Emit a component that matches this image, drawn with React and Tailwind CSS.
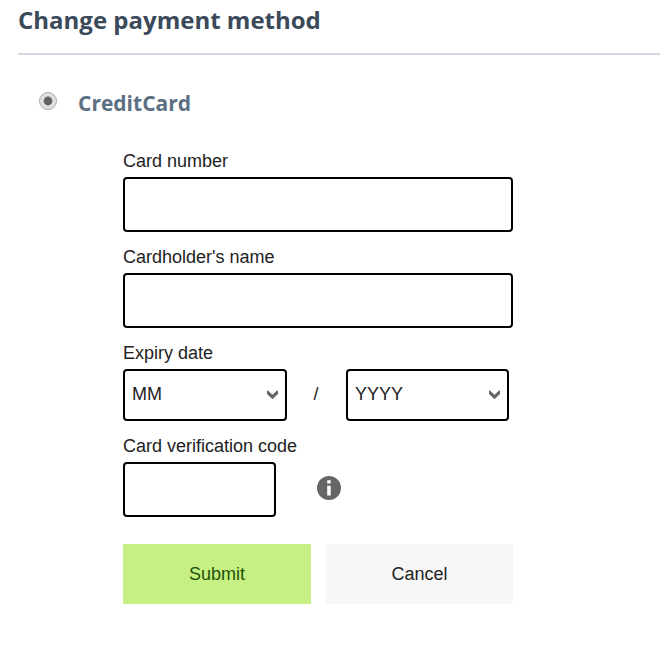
import { useState } from "react";

const months = ["01", "02", "03", "04", "05", "06", "07", "08", "09", "10", "11", "12"];
const years = ["2024", "2025", "2026", "2027", "2028", "2029", "2030"];

const inputClass = "block h-[55px] rounded-[4px] border-2 border-black bg-white px-2 outline-none";

const TextField = ({ id, label, value, onChange }) => (
  <div className="mb-[13px]">
    <label htmlFor={id} className="mb-1 block leading-6">
      {label}
    </label>
    <input
      id={id}
      type="text"
      className={`${inputClass} w-full`}
      value={value}
      onChange={(event) => onChange(event.target.value)}
    />
  </div>
);

const SelectField = ({ label, placeholder, options, className }) => (
  <div className={`relative h-[52px] ${className}`}>
    <select
      aria-label={label}
      defaultValue=""
      className="h-full w-full appearance-none rounded-[4px] border-2 border-black bg-white pr-8 pb-0.5 pl-[7px] outline-none"
    >
      <option value="">{placeholder}</option>
      {options.map((option) => (
        <option key={option} value={option}>
          {option}
        </option>
      ))}
    </select>
    <svg
      className="pointer-events-none absolute top-[21px] right-[9px] h-[10px] w-[11px]"
      viewBox="0 0 11 10"
      fill="#666"
    >
      <path d="M0 0.6 L1.2 0.8 L5.5 4.8 L9.8 0.8 L11 0.6 L11 4 L5.5 9.3 L0 4 Z" />
    </svg>
  </div>
);

const App = () => {
  const [cardNumber, setCardNumber] = useState("");
  const [cardholder, setCardholder] = useState("");
  const [code, setCode] = useState("");

  return (
    <div className="min-h-screen overflow-hidden bg-white pl-[18px] font-['Liberation_Sans',Arial,sans-serif] text-[18px] text-[#222]">
      <h1 className="h-[53px] pt-1 font-['Open_Sans',sans-serif] text-2xl leading-8 font-bold text-[#3b4a5a]">
        Change payment method
      </h1>
      <div className="h-0.5 bg-[#d9d9e6]" />

      <div className="mt-8 flex h-8 items-start pl-[21px]">
        <svg
          role="radio"
          aria-checked="true"
          aria-label="CreditCard"
          className="mt-[5px] size-[18px]"
          viewBox="0 0 18 18"
        >
          <circle cx="9" cy="9" r="8.5" fill="#e0e0e0" stroke="#a8a8a8" />
          <circle cx="9" cy="9" r="4.4" fill="#606060" />
        </svg>
        <h2 className="ml-[21px] font-['Open_Sans',sans-serif] text-[21px] leading-8 font-bold text-[#5b7083]">
          CreditCard
        </h2>
      </div>

      <form className="mt-[30px] ml-[105px] w-[390px]" onSubmit={(event) => event.preventDefault()}>
        <TextField id="number" label="Card number" value={cardNumber} onChange={setCardNumber} />
        <TextField id="name" label="Cardholder's name" value={cardholder} onChange={setCardholder} />

        <div className="mb-[13px]">
          <p className="mb-1 leading-6">Expiry date</p>
          <div className="flex items-center">
            <SelectField label="Expiry month" placeholder="MM" options={months} className="w-[164px]" />
            <span className="w-[59px] pr-px pb-0.5 text-center">/</span>
            <SelectField label="Expiry year" placeholder="YYYY" options={years} className="w-[163px]" />
          </div>
        </div>

        <label htmlFor="code" className="mb-1 block leading-6">
          Card verification code
        </label>
        <div className="flex items-center">
          <input
            id="code"
            type="text"
            className={`${inputClass} w-[153px]`}
            value={code}
            onChange={(event) => setCode(event.target.value)}
          />
          <svg className="mb-[3px] ml-[41px] size-6" viewBox="0 0 24 24">
            <circle cx="12" cy="12" r="12" fill="#666" />
            <path d="M10.2 4.3h3.5v3.2h-3.5zM10.2 9.8h3.5v9.7h-3.5z" fill="#fff" />
          </svg>
        </div>

        <div className="mt-[27px] flex gap-[15px]">
          <button type="submit" className="h-[60px] w-[188px] bg-[#c6f083] text-[#1f5206]">
            Submit
          </button>
          <button type="button" className="h-[60px] w-[187px] bg-[#f7f7f7]">
            Cancel
          </button>
        </div>
      </form>
    </div>
  );
};

export default App;
